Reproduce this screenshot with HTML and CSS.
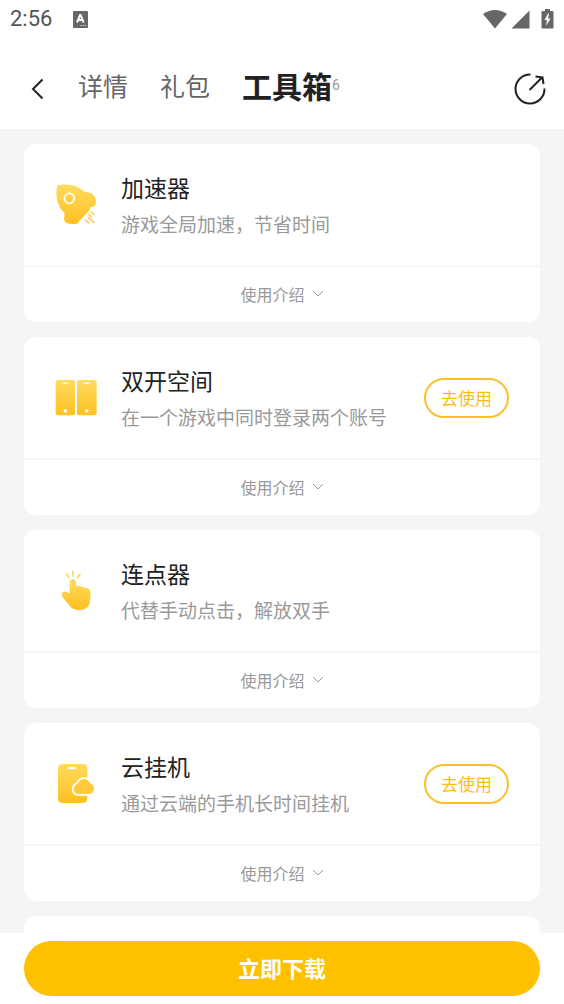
FILE: index.html
```html
<!DOCTYPE html>
<html lang="zh-CN">
<head>
<meta charset="utf-8">
<meta name="viewport" content="width=device-width, initial-scale=1">
<title>工具箱</title>
<link rel="stylesheet" href="styles.css">
</head>
<body>
<div class="status">
  <span class="status-time">2:56</span>
  <svg class="status-app" width="15" height="17" viewBox="0 0 15 17" aria-hidden="true"><rect width="15" height="17" rx="1" fill="#666"/><path d="M4 11.500 7 4h.6l3 7.500M5.500 9h3.800" fill="none" stroke="#fff" stroke-width="2"/><path d="M7.500 14.500h6" stroke="#ccc" stroke-width="1" stroke-dasharray="1.500 .7"/></svg>
  <svg class="status-icons" width="71" height="20" viewBox="0 0 71 20" aria-hidden="true"><g fill="#666"><path d="M0 5Q12-3 24 5L12 19.500Z"/><path d="M46.500 1.500v18H28.500Z"/><path d="M58.500 3q0-1 1-1h2.500V0h5v2H69.500q1 0 1 1v15.500q0 1-1 1h-10q-1 0-1-1Z"/></g><path d="M65 4.500 61.500 11h2.500l-1 6 4.500-7.500h-2.500l1-5Z" fill="#fff"/></svg>
</div>
<header class="nav">
  <button class="icon-button back" aria-label="返回"><svg width="13" height="22" viewBox="0 0 13 22"><path d="M11.500 1.500 2 11l9.500 9.500" fill="none" stroke="#222" stroke-width="2"/></svg></button>
  <nav class="tabs">
    <a class="tab" href="#detail">详情</a>
    <a class="tab" href="#gift">礼包</a>
    <a class="tab tab-active" href="#tools" aria-current="page">工具箱<span class="count">6</span></a>
  </nav>
  <button class="icon-button share" aria-label="分享"><svg width="32" height="32" viewBox="0 0 32 32"><g fill="none" stroke="#222" stroke-width="2"><path d="M16.500 1.500A14.500 14.500 0 1 0 30.500 15.500"/><path d="M15.500 17 28 4.500M21.500 3.500 28.500 4.500 29.500 11"/></g></svg></button>
</header>
<main class="list" id="tools">
  <section class="card">
    <div class="card-main">
      <svg class="tool-icon" viewBox="45 42 123 123" aria-hidden="true">
        <defs><linearGradient id="gold" x1="0" y1="0" x2="0" y2="1"><stop offset="0" stop-color="#fddb60"/><stop offset="1" stop-color="#ffc020"/></linearGradient></defs>
        <path fill="url(#gold)" d="M52 46Q88 38 116 53Q130 60 136 67Q157 65 165 82Q171 98 164 109Q158 112 152 111Q150 122 138 132L129 142L118 152Q116 162 100 162Q84 163 76 157Q70 150 74 130Q61 119 55 102Q45 76 52 46Z"/>
        <circle cx="88" cy="85" r="15" fill="none" stroke="#fff" stroke-width="5"/>
        <g stroke="#ffc532" stroke-width="4" stroke-linecap="round"><path d="M146 133 154 140M153 126 162 134M136 150 146 159M144 142 162 158"/></g>
      </svg>
      <div class="text"><h2 class="title">加速器</h2><p class="desc">游戏全局加速，节省时间</p></div>
    </div>
    <button class="intro">使用介绍<svg class="chevron" viewBox="0 0 12 7" aria-hidden="true"><path d="M1 1 6 6 11 1"/></svg></button>
  </section>
  <section class="card">
    <div class="card-main">
      <svg class="tool-icon" viewBox="45 36 123 123" aria-hidden="true">
        <rect x="47" y="45" width="58" height="106" rx="8" fill="url(#gold)"/><rect x="111" y="45" width="59" height="106" rx="8" fill="url(#gold)"/>
        <path d="M69 54.500H83M133 54.500H147" stroke="#fff" stroke-width="4" stroke-linecap="round"/><circle cx="76" cy="138" r="5.500" fill="#fff"/><circle cx="140" cy="138" r="5.500" fill="#fff"/>
      </svg>
      <div class="text"><h2 class="title">双开空间</h2><p class="desc">在一个游戏中同时登录两个账号</p></div>
      <button class="use">去使用</button>
    </div>
    <button class="intro">使用介绍<svg class="chevron" viewBox="0 0 12 7" aria-hidden="true"><path d="M1 1 6 6 11 1"/></svg></button>
  </section>
  <section class="card">
    <div class="card-main">
      <svg class="tool-icon" viewBox="45 45 123 123" aria-hidden="true">
        <path fill="url(#gold)" d="M89 83Q89 73 98.500 73Q108 73 108 83V92Q116 90 121 95Q130 93 134 99Q151 98 151 111V134Q150 164 119 165Q102 166 92 156L68 127Q62 117 69 111Q76 107 83 112L89 117Z"/>
        <path d="M99 49V63M79 57 86 67M120 58 112 68" stroke="#fdd65c" stroke-width="5" stroke-linecap="round"/>
      </svg>
      <div class="text"><h2 class="title">连点器</h2><p class="desc">代替手动点击，解放双手</p></div>
    </div>
    <button class="intro">使用介绍<svg class="chevron" viewBox="0 0 12 7" aria-hidden="true"><path d="M1 1 6 6 11 1"/></svg></button>
  </section>
  <section class="card">
    <div class="card-main">
      <svg class="tool-icon" viewBox="45 39 123 123" aria-hidden="true">
        <rect x="54" y="42" width="88" height="117" rx="13" fill="url(#gold)"/>
        <path d="M88 54.500H104" stroke="#fff" stroke-width="7" stroke-linecap="round"/>
        <path d="M116 132C104 132 100 123 101 115C102 108 107 104 113 101C118 92 123 87 132 87C142 87 146 94 150 99C158 102 162 108 162 116C162 126 154 132 146 132Z" fill="#ffcb3b" stroke="#fff" stroke-width="11" paint-order="stroke"/>
      </svg>
      <div class="text"><h2 class="title">云挂机</h2><p class="desc">通过云端的手机长时间挂机</p></div>
      <button class="use">去使用</button>
    </div>
    <button class="intro">使用介绍<svg class="chevron" viewBox="0 0 12 7" aria-hidden="true"><path d="M1 1 6 6 11 1"/></svg></button>
  </section>
  <section class="card"><div class="card-main"></div></section>
</main>
<footer class="footer"><button class="download">立即下载</button></footer>
</body>
</html>
```

FILE: styles.css
```css
* { box-sizing: border-box; }
body {
  margin: 0;
  height: 100vh;
  display: flex;
  flex-direction: column;
  background: #fff;
  color: #222;
  font-family: "Noto Sans CJK SC", sans-serif;
}
button {
  margin: 0;
  padding: 0;
  border: 0;
  background: none;
  font-family: inherit;
  cursor: pointer;
}
svg { display: block; flex: none; }
.status {
  flex: none;
  display: flex;
  align-items: center;
  height: 38px;
  padding: 0 10px;
}
.status-time {
  font: 400 22px/38px Roboto, sans-serif;
  color: #555;
}
.status-app { margin-left: 21px; }
.status-icons { margin-left: auto; }
.nav {
  flex: none;
  display: flex;
  align-items: center;
  height: 91px;
  padding: 10px 18px 0 31px;
}
.tabs {
  flex: 1;
  display: flex;
  align-items: center;
  gap: 32px;
  margin-left: 34px;
  padding-bottom: 8px;
}
.tab {
  display: flex;
  align-items: center;
  color: #666;
  font-size: 25px;
  line-height: 36px;
  text-decoration: none;
}
.tab-active {
  color: #222;
  font-size: 30px;
  font-weight: 700;
}
.count {
  color: #999;
  font: 400 14px/20px Roboto, sans-serif;
}
.list {
  flex: 1;
  min-height: 0;
  overflow-y: auto;
  scrollbar-width: none;
  display: flex;
  flex-direction: column;
  gap: 15px;
  padding: 15px 24px;
  background: #f4f5f7;
}
.card {
  flex: none;
  border-radius: 12px;
  background: #fff;
}
.card-main {
  display: flex;
  align-items: center;
  min-height: 121px;
  padding: 0 31px;
}
.tool-icon {
  width: 41px;
  height: 41px;
  overflow: visible;
}
.text {
  flex: 1;
  margin-left: 25px;
}
.title {
  margin: 0;
  font-size: 23px;
  font-weight: 400;
  line-height: 38px;
}
.desc {
  margin: 0;
  color: #999;
  font-size: 19px;
  line-height: 36px;
}
.use {
  width: 85px;
  height: 40px;
  border: 2px solid #fbc02d;
  border-radius: 20px;
  color: #fbbc14;
  font-size: 17px;
  line-height: 24px;
}
.intro {
  display: flex;
  align-items: center;
  justify-content: center;
  gap: 7px;
  width: 100%;
  height: 57px;
  padding-bottom: 2px;
  border-top: 2px solid #f5f6f7;
  color: #999;
  font-size: 16px;
  line-height: 24px;
}
.chevron {
  width: 12px;
  height: 7px;
  fill: none;
  stroke: #999;
}
.footer {
  flex: none;
  padding: 8px 24px;
}
.download {
  width: 100%;
  height: 55px;
  padding-bottom: 3px;
  border-radius: 28px;
  background: #ffc000;
  color: #fff;
  font-size: 22px;
  font-weight: 700;
  line-height: 32px;
}
```
